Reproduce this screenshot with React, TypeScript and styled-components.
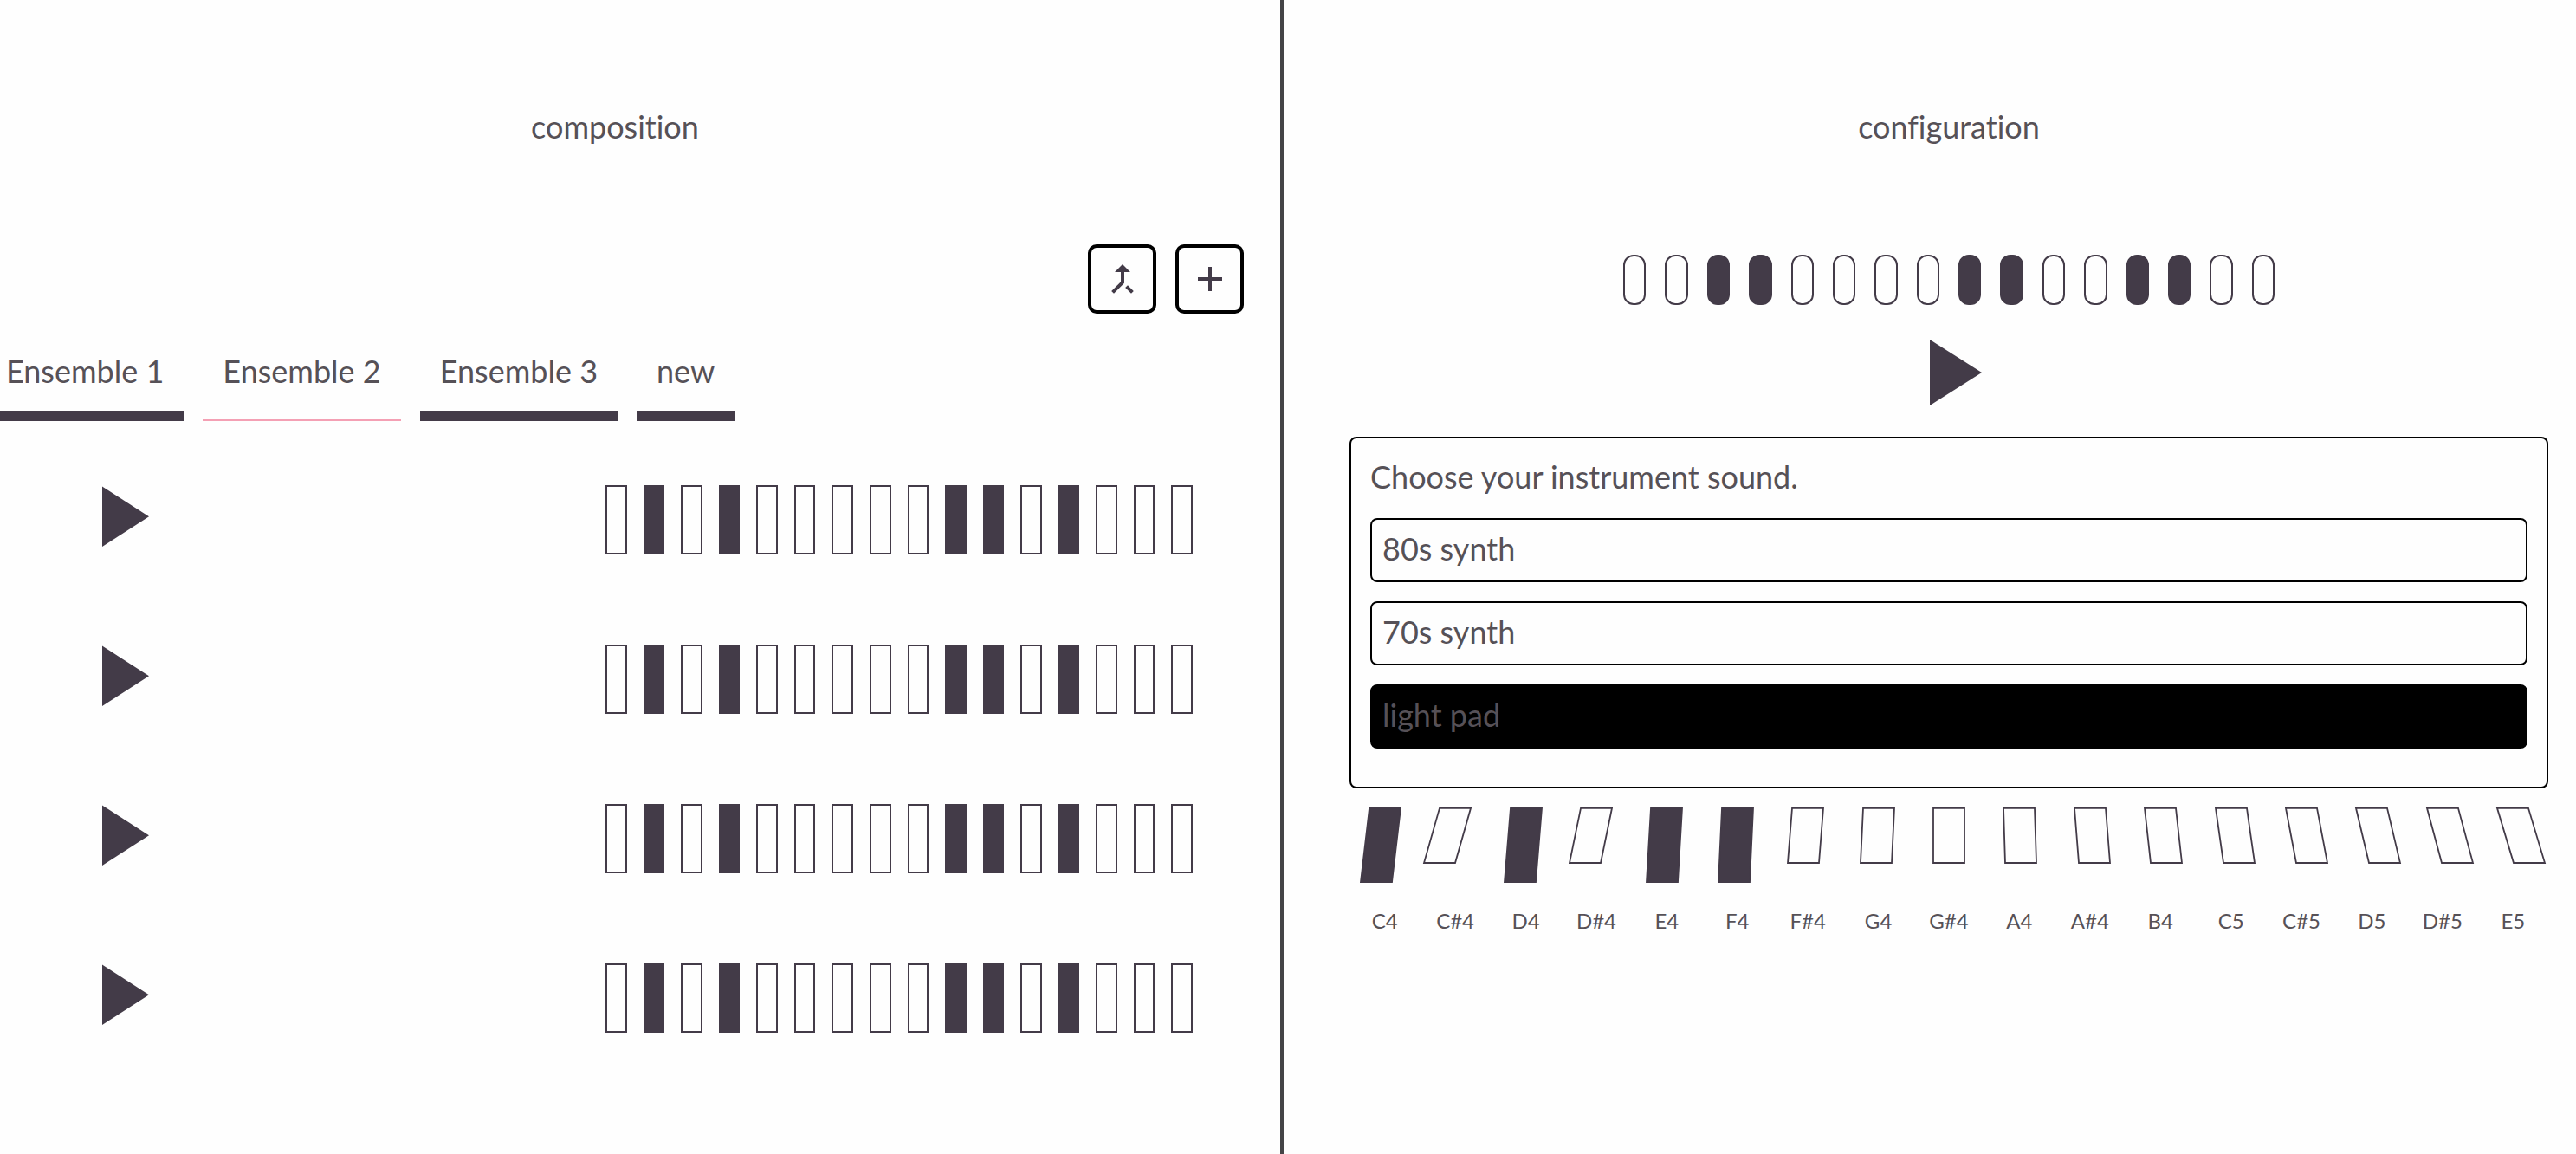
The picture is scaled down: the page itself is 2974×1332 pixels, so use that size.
import React, { useState } from "react";
import styled, { createGlobalStyle } from "styled-components";
import { MdAdd, MdCallMerge } from "react-icons/md";

const ink = "#433b48";
const text = "#565157";
const pink = "#f4a0b4";

const GlobalStyle = createGlobalStyle`
  *, *::before, *::after { box-sizing: border-box; }
  body {
    margin: 0;
    background: #fefefe;
    color: ${text};
    font-family: Lato, "Open Sans", sans-serif;
    font-size: 36px;
    font-variant-ligatures: none;
    line-height: 44px;
    overflow-x: hidden;
  }
  button {
    margin: 0;
    padding: 0;
    border: 0;
    background: none;
    color: inherit;
    font: inherit;
    cursor: pointer;
  }
`;

const Page = styled.div`
  display: grid;
  grid-template-columns: calc(50% - 5px) 1fr;
  min-height: 100vh;
`;

const Composition = styled.section`
  display: flex;
  flex-direction: column;
  min-width: 0;
  padding: 124px 42px 0 0;
  border-right: 4px solid #444446;
`;

const Configuration = styled.section`
  display: flex;
  flex-direction: column;
  align-items: center;
  min-width: 0;
  padding: 124px 32px 0 76px;
`;

/* The left-hand content runs slightly past the window edge. */
const Bleed = styled.div`
  display: flex;
  flex-direction: column;
  margin-left: -16px;
`;

const Title = styled.h1`
  margin: 0;
  font-size: 36px;
  font-weight: 400;
  text-align: center;
`;

const Toolbar = styled.div`
  display: flex;
  justify-content: flex-end;
  gap: 22px;
  margin-top: 114px;
`;

const IconButton = styled.button`
  display: flex;
  align-items: center;
  justify-content: center;
  width: 79px;
  height: 80px;
  border: 4px solid #000;
  border-radius: 10px;
  color: ${ink};
  font-size: 48px;
`;

const Tabs = styled.div`
  display: flex;
  gap: 22px;
  margin-top: 42px;
`;

const Tab = styled.button<{ $active: boolean }>`
  display: flex;
  align-items: flex-start;
  height: 82px;
  padding: 2px 23px 0;
  border-bottom: ${(p) => (p.$active ? `2px solid ${pink}` : `12px solid ${ink}`)};
`;

const Rows = styled.div`
  display: flex;
  flex-direction: column;
  gap: 104px;
  margin-top: 74px;
  padding: 0 59px 0 134px;
`;

const Row = styled.div`
  display: flex;
  justify-content: space-between;
  align-items: flex-start;
`;

const PlayButton = styled.button<{ $large?: boolean }>`
  display: block;
  width: ${(p) => (p.$large ? 60 : 54)}px;
  height: ${(p) => (p.$large ? 76 : 72)}px;
  flex: none;

  svg {
    display: block;
    width: 100%;
    height: 100%;
  }
`;

const RowSteps = styled.div`
  display: grid;
  grid-template-columns: repeat(16, 1fr);
  gap: 19px;
  flex: 0 1 678px;
`;

const RowStep = styled.button<{ $on: boolean }>`
  height: 80px;
  border: 2px solid ${ink};
  background: ${(p) => (p.$on ? ink : "transparent")};
`;

const PillSteps = styled.div`
  display: grid;
  grid-template-columns: repeat(16, 1fr);
  gap: 22px;
  width: 752px;
  max-width: 100%;
  margin: 126px 0 40px;
`;

const Pill = styled.button<{ $on: boolean }>`
  height: 58px;
  border: 2px solid ${ink};
  border-radius: 12px;
  background: ${(p) => (p.$on ? ink : "transparent")};
`;

const PlaySlot = styled.div`
  padding-left: 16px;
`;

const SoundBox = styled.div`
  display: flex;
  flex-direction: column;
  gap: 22px;
  width: 100%;
  margin: 36px 0 22px;
  padding: 22px 22px 44px;
  border: 2px solid #000;
  border-radius: 8px;
`;

const Prompt = styled.p`
  margin: 0 0 4px;
`;

const Sound = styled.button<{ $active: boolean }>`
  padding: 11px 12px 15px;
  border: 2px solid #000;
  border-radius: 8px;
  background: ${(p) => (p.$active ? "#000" : "transparent")};
  text-align: left;
`;

const Keyboard = styled.div`
  display: grid;
  grid-template-columns: repeat(17, 1fr);
  width: 100%;
`;

const Key = styled.button`
  display: flex;
  flex-direction: column;
  align-items: center;
  gap: 28px;
  font-size: 24px;
  line-height: 30px;
`;

const KeyShape = styled.svg`
  display: block;
  width: 38px;
  height: 88px;
  overflow: visible;
`;

const ENSEMBLES = ["Ensemble 1", "Ensemble 2", "Ensemble 3", "new"];
const SOUNDS = ["80s synth", "70s synth", "light pad"];
const STEPS = Array.from({ length: 16 }, (_, i) => i);
const ROW_PATTERN = [1, 3, 9, 10, 12];
const PILL_PATTERN = [2, 3, 8, 9, 12, 13];

/* lean: how far the foot of the key sits to the right of its top */
const KEYS = [
  { note: "C4", lean: -10 },
  { note: "C#4", lean: -18 },
  { note: "D4", lean: -7 },
  { note: "D#4", lean: -13 },
  { note: "E4", lean: -5 },
  { note: "F4", lean: -4 },
  { note: "F#4", lean: -5 },
  { note: "G4", lean: -3 },
  { note: "G#4", lean: 0 },
  { note: "A4", lean: 2 },
  { note: "A#4", lean: 5 },
  { note: "B4", lean: 7 },
  { note: "C5", lean: 9 },
  { note: "C#5", lean: 12 },
  { note: "D5", lean: 15 },
  { note: "D#5", lean: 17 },
  { note: "E5", lean: 19 },
];

function toggle(list: number[], i: number) {
  return list.includes(i) ? list.filter((n) => n !== i) : [...list, i];
}

function Triangle({ large }: { large?: boolean }) {
  return large ? (
    <svg viewBox="0 0 60 76" aria-hidden="true">
      <path d="M0 0L60 38L0 76Z" fill={ink} />
    </svg>
  ) : (
    <svg viewBox="0 0 54 72" aria-hidden="true">
      <path d="M0 1.5L54 36.3L0 71Z" fill={ink} />
    </svg>
  );
}

function InstrumentRow({ index }: { index: number }) {
  const [on, setOn] = useState(ROW_PATTERN);
  return (
    <Row>
      <PlayButton aria-label={`Play instrument ${index + 1}`}>
        <Triangle />
      </PlayButton>
      <RowSteps>
        {STEPS.map((i) => (
          <RowStep
            key={i}
            $on={on.includes(i)}
            aria-pressed={on.includes(i)}
            aria-label={`Step ${i + 1}`}
            onClick={() => setOn(toggle(on, i))}
          />
        ))}
      </RowSteps>
    </Row>
  );
}

function PianoKey({ note, lean, on, onClick }: { note: string; lean: number; on: boolean; onClick: () => void }) {
  const foot = on ? 86 : 64;
  return (
    <Key aria-pressed={on} onClick={onClick}>
      <KeyShape viewBox="0 0 38 88" aria-hidden="true">
        <polygon
          points={`1,0.8 37,0.8 ${37 + lean},${foot} ${1 + lean},${foot}`}
          fill={on ? ink : "none"}
          stroke={ink}
          strokeWidth="1.8"
        />
      </KeyShape>
      {note}
    </Key>
  );
}

export default function App() {
  const [tab, setTab] = useState(1);
  const [sound, setSound] = useState(2);
  const [pills, setPills] = useState(PILL_PATTERN);
  const [keys, setKeys] = useState([0, 2, 4, 5]);

  return (
    <>
      <GlobalStyle />
      <Page>
        <Composition>
          <Bleed>
            <Title>composition</Title>
            <Toolbar>
              <IconButton aria-label="Merge">
                <MdCallMerge />
              </IconButton>
              <IconButton aria-label="Add">
                <MdAdd />
              </IconButton>
            </Toolbar>
            <Tabs>
              {ENSEMBLES.map((name, i) => (
                <Tab key={name} $active={tab === i} onClick={() => setTab(i)}>
                  {name}
                </Tab>
              ))}
            </Tabs>
            <Rows>
              {[0, 1, 2, 3].map((i) => (
                <InstrumentRow key={i} index={i} />
              ))}
            </Rows>
          </Bleed>
        </Composition>
        <Configuration>
          <Title>configuration</Title>
          <PillSteps>
            {STEPS.map((i) => (
              <Pill
                key={i}
                $on={pills.includes(i)}
                aria-pressed={pills.includes(i)}
                aria-label={`Step ${i + 1}`}
                onClick={() => setPills(toggle(pills, i))}
              />
            ))}
          </PillSteps>
          <PlaySlot>
            <PlayButton $large aria-label="Play">
              <Triangle large />
            </PlayButton>
          </PlaySlot>
          <SoundBox>
            <Prompt>Choose your instrument sound.</Prompt>
            {SOUNDS.map((name, i) => (
              <Sound key={name} $active={sound === i} aria-pressed={sound === i} onClick={() => setSound(i)}>
                {name}
              </Sound>
            ))}
          </SoundBox>
          <Keyboard>
            {KEYS.map((k, i) => (
              <PianoKey
                key={k.note}
                note={k.note}
                lean={k.lean}
                on={keys.includes(i)}
                onClick={() => setKeys(toggle(keys, i))}
              />
            ))}
          </Keyboard>
        </Configuration>
      </Page>
    </>
  );
}
